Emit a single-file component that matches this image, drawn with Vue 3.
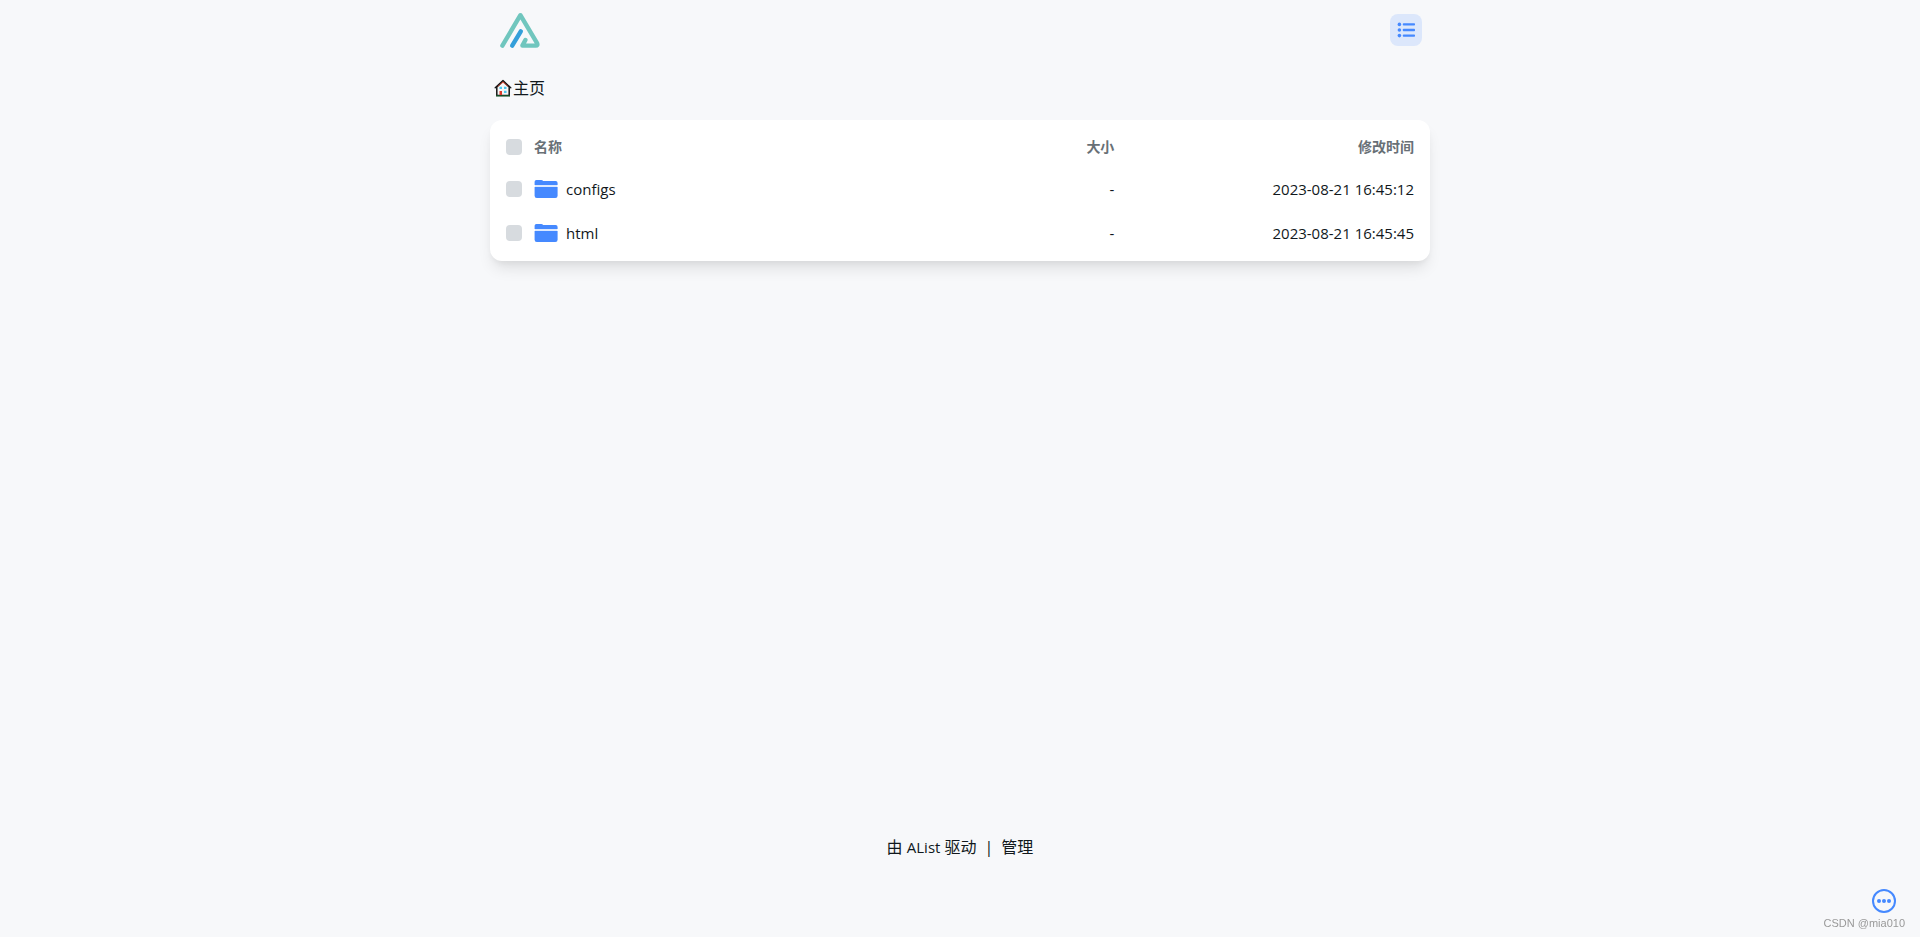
<script setup>
import { ref } from 'vue'

const files = ref([
  { name: 'configs', size: '-', modified: '2023-08-21 16:45:12', checked: false },
  { name: 'html', size: '-', modified: '2023-08-21 16:45:45', checked: false },
])
const allChecked = ref(false)

function toggleAll() {
  files.value.forEach((file) => {
    file.checked = allChecked.value
  })
}
</script>

<template>
  <div class="page">
    <header class="header">
      <a href="#" class="logo" aria-label="AList">
        <svg width="40" height="40" viewBox="0 0 40 40" fill="none" stroke-width="4.4" stroke-linecap="round" stroke-linejoin="round">
          <path d="M2.4 35.6 20.4 5.2 37.2 33.4Q38 35.6 35.8 35.6H22.4L25.4 30" stroke="#70c6be" />
          <path d="M12.2 35.6 20.8 21.4" stroke="#349fda" />
        </svg>
      </a>
      <button type="button" class="layout-button" aria-label="列表">
        <svg width="20" height="20" viewBox="0 0 20 20" fill="#4589ff">
          <circle cx="3.4" cy="4.4" r="1.8" />
          <circle cx="3.4" cy="10" r="1.8" />
          <circle cx="3.4" cy="15.6" r="1.8" />
          <rect x="6.8" y="3.2" width="12.2" height="2.4" rx=".8" />
          <rect x="6.8" y="8.800" width="12.2" height="2.4" rx=".8" />
          <rect x="6.8" y="14.4" width="12.2" height="2.4" rx=".8" />
        </svg>
      </button>
    </header>

    <nav class="breadcrumb">
      <a href="#">
        <svg width="18" height="18" viewBox="0 0 18 18">
          <path d="M2.800 8 9 2.5 15.200 8V16.5H2.800Z" fill="#f6f6f6" stroke="#161616" stroke-width="1.5" />
          <path d="M3.600 7.400 9 2.800 14.400 7.400" fill="none" stroke="#e8533f" stroke-width="1.200" />
          <path d="M1.200 8.800 9 1.400 16.800 8.800" fill="none" stroke="#161616" stroke-width="1.300" stroke-linecap="round" stroke-linejoin="round" />
          <path d="M5.500 7.800H8V10H5.500ZM10 7.800H12.500V10H10ZM10 11.800H12.500V14H10Z" fill="#4cc7ef" />
          <path d="M5.500 12H8V16H5.500Z" fill="#dc3b2c" />
          <path d="M2 16.800H16" stroke="#175c2b" stroke-width="1.200" />
        </svg>
        <span>主页</span>
      </a>
    </nav>

    <main class="card">
      <table>
        <thead>
          <tr>
            <th class="check"><input v-model="allChecked" type="checkbox" aria-label="全选" @change="toggleAll" /></th>
            <th class="name">名称</th>
            <th class="size">大小</th>
            <th class="time">修改时间</th>
          </tr>
        </thead>
        <tbody>
          <tr v-for="file in files" :key="file.name">
            <td class="check"><input v-model="file.checked" type="checkbox" :aria-label="file.name" /></td>
            <td class="name">
              <a href="#" class="file">
                <svg width="24" height="24" viewBox="0 0 24 24">
                  <path d="M.6 5V4.800Q.6 3 2.400 3H7.200Q8.400 3 9.200 4H21.600Q23.600 4 23.600 6V8H.6Z" fill="#4589ff" />
                  <path d="M1 8H23.200V10H1Z" fill="#dce9ff" />
                  <path d="M.6 10H23.600V18.800Q23.600 21 21.400 21H2.800Q.6 21 .6 18.800Z" fill="#4589ff" />
                </svg>
                <span>{{ file.name }}</span>
              </a>
            </td>
            <td class="size">{{ file.size }}</td>
            <td class="time">{{ file.modified }}</td>
          </tr>
        </tbody>
      </table>
    </main>

    <footer class="footer">
      <a href="#">由 <span class="latin">AList</span> 驱动</a>
      <span>|</span>
      <a href="#">管理</a>
    </footer>

    <button type="button" class="more" aria-label="更多">
      <svg width="24" height="24" viewBox="0 0 24 24" fill="#4589ff">
        <circle cx="12" cy="12" r="11" fill="none" stroke="#4589ff" stroke-width="2" />
        <circle cx="7" cy="12" r="2" />
        <circle cx="12" cy="12" r="2" />
        <circle cx="17" cy="12" r="2" />
      </svg>
    </button>
    <div class="watermark">CSDN @mia010</div>
  </div>
</template>

<style>
body {
  background: #f7f8fa;
}
</style>

<style scoped>
.page {
  box-sizing: border-box;
  min-height: 100vh;
  padding-bottom: 78px;
  display: flex;
  flex-direction: column;
  align-items: center;
  color: #11181c;
  font: 16px/24px "Open Sans", "Noto Sans CJK SC", sans-serif;
}
a {
  color: inherit;
  text-decoration: none;
}
svg {
  display: block;
  flex: none;
}
button {
  padding: 0;
  border: 0;
  background: none;
  cursor: pointer;
}
.header,
.breadcrumb,
.card {
  box-sizing: border-box;
  width: calc(100% - 32px);
  max-width: 940px;
}
.header {
  height: 60px;
  padding: 0 8px 0 10px;
  display: flex;
  align-items: center;
  justify-content: space-between;
}
.layout-button {
  width: 32px;
  height: 32px;
  border-radius: 8px;
  background: #dce7fb;
  display: grid;
  place-items: center;
}
.breadcrumb {
  display: flex;
  padding: 16px 4px 20px;
}
.breadcrumb a {
  display: flex;
  align-items: center;
  gap: 1px;
}
.card {
  padding: 6px 16px;
  border-radius: 12px;
  background: #fff;
  box-shadow: 0 10px 15px -3px rgba(0, 0, 0, 0.1), 0 4px 6px -2px rgba(0, 0, 0, 0.05);
}
table {
  width: 100%;
  table-layout: fixed;
  border-collapse: collapse;
}
th,
td {
  padding: 0;
  text-align: left;
  white-space: nowrap;
}
th {
  height: 41px;
  color: #687076;
  font-size: 14px;
  font-weight: 700;
}
td {
  height: 44px;
  font-size: 15px;
}
.check {
  width: 28px;
}
.size {
  width: 22%;
  text-align: right;
}
.time {
  width: 33%;
  text-align: right;
}
input {
  appearance: none;
  display: block;
  width: 16px;
  height: 16px;
  margin: 0;
  border-radius: 4px;
  background: #d7dbdf;
}
input:checked {
  background: #4589ff;
}
.file {
  display: flex;
  align-items: center;
  gap: 8px;
}
.footer {
  margin-top: auto;
  padding-top: 40px;
  display: flex;
  gap: 8px;
}
.latin {
  font-size: 15px;
}
.more {
  position: fixed;
  right: 24px;
  bottom: 24px;
}
.watermark {
  position: fixed;
  right: 15px;
  bottom: 6px;
  color: #999;
  font: 11px/16px "Liberation Sans", sans-serif;
}
</style>
